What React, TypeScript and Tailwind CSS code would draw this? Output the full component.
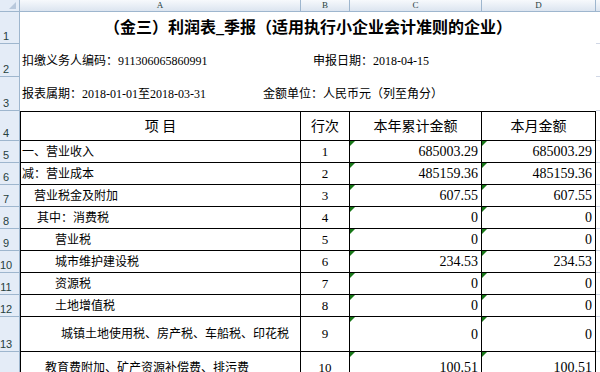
const SERIF = "font-['Liberation_Serif','Noto_Sans_CJK_SC',serif]";

type Row = { no: string; label: string; pad: string; year: string; month: string };

const ROWS: Row[] = [
  { no: '1', label: '一、营业收入', pad: 'pl-[1px]', year: '685003.29', month: '685003.29' },
  { no: '2', label: '减：营业成本', pad: 'pl-[1px]', year: '485159.36', month: '485159.36' },
  { no: '3', label: '营业税金及附加', pad: 'pl-[13px]', year: '607.55', month: '607.55' },
  { no: '4', label: '其中：消费税', pad: 'pl-[16px]', year: '0', month: '0' },
  { no: '5', label: '营业税', pad: 'pl-[34px]', year: '0', month: '0' },
  { no: '6', label: '城市维护建设税', pad: 'pl-[34px]', year: '234.53', month: '234.53' },
  { no: '7', label: '资源税', pad: 'pl-[34px]', year: '0', month: '0' },
  { no: '8', label: '土地增值税', pad: 'pl-[34px]', year: '0', month: '0' },
  { no: '9', label: '城镇土地使用税、房产税、车船税、印花税', pad: 'pl-[40px]', year: '0', month: '0' },
  { no: '10', label: '教育费附加、矿产资源补偿费、排污费', pad: 'pl-[24px]', year: '100.51', month: '100.51' },
];

function RowHead({ n }: { n: number }) {
  return (
    <div className="bg-[#e4ecf7] border-r border-b border-[#9eb6ce] flex items-end justify-center pr-[7px] text-[11px] leading-[13px] text-[#27413e] font-['Liberation_Sans',sans-serif]">
      {n}
    </div>
  );
}

function ColHead({ letter, last }: { letter?: string; last?: boolean }) {
  return (
    <div
      className={`bg-linear-to-b from-[#f7f9fc] to-[#dce5f0] border-b border-[#9eb6ce] ${last ? '' : 'border-r'} flex items-center justify-center text-[9px] leading-none text-[#27413e] font-['Liberation_Serif',serif]`}
    >
      {letter}
    </div>
  );
}

function Gap() {
  return <div className="border-b border-[#d0d7e5]" />;
}

function Tri() {
  return (
    <span className="absolute top-0 left-0 w-0 h-0 border-t-[5px] border-t-[#187818] border-r-[5px] border-r-transparent" />
  );
}

export default function App() {
  return (
    <div className={`w-[600px] h-[372px] overflow-hidden bg-white text-black ${SERIF}`}>
      <div className="grid grid-cols-[20px_281px_49px_132px_114px_4px] grid-rows-[12px_32px_33px_34px_30px_repeat(8,22px)_35px_32px]">
        {/* column letters */}
        <div className="relative bg-[#e4ecf7] border-r border-b border-[#9eb6ce]">
          <span className="absolute right-[3px] bottom-[2px] w-0 h-0 border-b-[7px] border-b-[#b8c8dc] border-l-[7px] border-l-transparent" />
        </div>
        <ColHead letter="A" />
        <ColHead letter="B" />
        <ColHead letter="C" />
        <ColHead letter="D" />
        <ColHead last />

        {/* row 1 */}
        <RowHead n={1} />
        <div className="col-span-4 flex items-center justify-center text-[16px] font-bold">
          （金三）利润表_季报（适用执行小企业会计准则的企业）
        </div>
        <Gap />

        {/* row 2 */}
        <RowHead n={2} />
        <div className="flex items-center pl-[2px] text-[12px]">扣缴义务人编码：911306065860991</div>
        <div className="col-span-3 flex items-center pl-[12px] text-[12px]">申报日期：2018-04-15</div>
        <Gap />

        {/* row 3 */}
        <RowHead n={3} />
        <div className="col-span-4 flex items-center pl-[2px] text-[12px]">
          <span className="w-[241px] shrink-0">报表属期：2018-01-01至2018-03-31</span>
          <span>金额单位：人民币元（列至角分）</span>
        </div>
        <Gap />

        {/* row 4 header */}
        <RowHead n={4} />
        <div className="border-l border-t border-r border-b border-black flex items-center justify-center text-[14px]">
          项 目
        </div>
        <div className="border-t border-r border-b border-black flex items-center justify-center text-[14px]">行次</div>
        <div className="border-t border-r border-b border-black flex items-center justify-center text-[14px]">本年累计金额</div>
        <div className="border-t border-r border-b border-black flex items-center justify-center text-[14px]">本月金额</div>
        <Gap />

        {ROWS.map((r, i) => (
          <>
            <RowHead key={`h${r.no}`} n={i + 5} />
            <div key={`a${r.no}`} className={`border-l border-r border-b border-black flex items-center whitespace-nowrap text-[12px] ${r.pad}`}>
              {r.label}
            </div>
            <div key={`b${r.no}`} className="border-r border-b border-black flex items-center justify-center text-[13px]">
              {r.no}
            </div>
            <div key={`c${r.no}`} className="relative border-r border-b border-black flex items-center justify-end pr-[3px] text-[14px]">
              <Tri />
              {r.year}
            </div>
            <div key={`d${r.no}`} className="relative border-r border-b border-black flex items-center justify-end pr-[3px] text-[14px]">
              <Tri />
              {r.month}
            </div>
            <Gap key={`e${r.no}`} />
          </>
        ))}
      </div>
    </div>
  );
}
